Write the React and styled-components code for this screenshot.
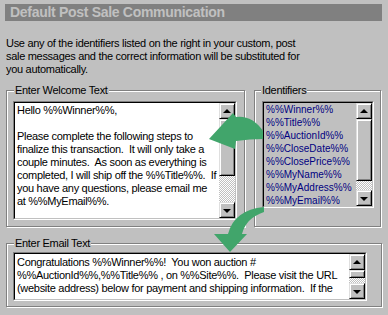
import React from "react";
import styled, { createGlobalStyle } from "styled-components";

const GlobalStyle = createGlobalStyle`
  html, body {
    margin: 0;
    padding: 0;
    background: #c0c0c0;
  }
  body {
    font-family: "Liberation Sans", Arial, sans-serif;
    font-size: 11px;
    letter-spacing: -0.3px;
    color: #000;
  }
`;

const Page = styled.div`
  position: relative;
  width: 388px;
  height: 315px;
  overflow: hidden;
  background: #c0c0c0;
  padding-top: 4px;
  box-sizing: border-box;
`;

const TitleBar = styled.div`
  margin: 0 6px 0 5px;
  height: 17px;
  background: #808080;
  color: #c0c0c0;
  font-weight: bold;
  font-size: 14px;
  line-height: 17px;
  padding-left: 5px;
  white-space: nowrap;
`;

const Intro = styled.p`
  margin: 16px 0 0 6px;
  line-height: 13px;
`;

const Row = styled.div`
  display: flex;
  margin: 14px 0 0 6px;
  gap: 9px;
`;

const Group = styled.div`
  position: relative;
  box-sizing: border-box;
  width: ${(p) => p.$w}px;
  height: ${(p) => p.$h}px;
  border: 1px solid #808080;
  box-shadow: inset 1px 1px 0 #fff, 1px 1px 0 #fff;
  padding: ${(p) => p.$pad};
`;

const EmailGroup = styled(Group)`
  margin: 16px 0 0 6px;
`;

const GroupLabel = styled.span`
  position: absolute;
  top: -7px;
  left: ${(p) => p.$left || 7}px;
  padding: 0 1px;
  background: #c0c0c0;
  line-height: 13px;
  white-space: nowrap;
`;

const Field = styled.div`
  box-sizing: border-box;
  width: ${(p) => p.$w}px;
  height: ${(p) => p.$h}px;
  border: 1px solid;
  border-color: #808080 #fff #fff #808080;
  display: flex;
`;

const FieldInner = styled.div`
  flex: 1;
  display: flex;
  border: 1px solid;
  border-color: #000 #c0c0c0 #c0c0c0 #000;
  background: ${(p) => (p.$white ? "#fff" : "#c0c0c0")};
  min-width: 0;
`;

const TextContent = styled.div`
  flex: 1;
  overflow: hidden;
  white-space: pre;
  line-height: 13px;
  padding: ${(p) => p.$pad};
`;

const ListContent = styled.ul`
  flex: 1;
  list-style: none;
  margin: 0;
  padding: 0 0 0 2px;
  overflow: hidden;
  color: #000080;
  font-size: 10px;
  letter-spacing: 0;
  line-height: 13px;
`;

const ScrollBar = styled.div`
  width: 16px;
  display: flex;
  flex-direction: column;
`;

const ScrollButton = styled.div`
  box-sizing: border-box;
  width: 16px;
  height: 16px;
  flex: none;
  background: #c0c0c0;
  border: 1px solid;
  border-color: #dfdfdf #000 #000 #dfdfdf;
  box-shadow: inset 1px 1px 0 #fff, inset -1px -1px 0 #808080;
  display: flex;
  align-items: center;
  justify-content: center;
`;

const Arrow = styled.span`
  width: 0;
  height: 0;
  border-left: 4px solid transparent;
  border-right: 4px solid transparent;
  ${(p) =>
    p.$down
      ? "border-top: 4px solid #000; margin-top: 1px;"
      : "border-bottom: 4px solid #000; margin-top: -1px;"}
`;

const Thumb = styled(ScrollButton)`
  height: ${(p) => p.$h}px;
`;

const Track = styled.div`
  flex: 1;
  background: repeating-conic-gradient(#fff 0 25%, #c0c0c0 0 50%) 0 0 / 2px 2px;
`;

const Overlay = styled.svg`
  position: absolute;
  left: 0;
  top: 0;
  pointer-events: none;
`;

function Scroll({ thumb }) {
  return (
    <ScrollBar>
      <ScrollButton>
        <Arrow />
      </ScrollButton>
      <Thumb $h={thumb} />
      <Track />
      <ScrollButton>
        <Arrow $down />
      </ScrollButton>
    </ScrollBar>
  );
}

const welcome = `Hello %%Winner%%,

Please complete the following steps to
finalize this transaction.  It will only take a
couple minutes.  As soon as everything is
completed, I will ship off the %%Title%%.  If
you have any questions, please email me
at %%MyEmail%%.`;

const email = `Congratulations %%Winner%%!  You won auction #
%%AuctionId%%,%%Title%% , on %%Site%%.  Please visit the URL
(website address) below for payment and shipping information.  If the`;

const identifiers = [
  "%%Winner%%",
  "%%Title%%",
  "%%AuctionId%%",
  "%%CloseDate%%",
  "%%ClosePrice%%",
  "%%MyName%%",
  "%%MyAddress%%",
  "%%MyEmail%%",
];

export default function App() {
  return (
    <>
      <GlobalStyle />
      <Page>
        <TitleBar>Default Post Sale Communication</TitleBar>
        <Intro>
          Use any of the identifiers listed on the right in your custom, post
          <br />
          sale messages and the correct information will be substituted for
          <br />
          you automatically.
        </Intro>
        <Row>
          <Group $w={239} $h={137} $pad="10px 0 0 6px">
            <GroupLabel>Enter Welcome Text</GroupLabel>
            <Field $w={224} $h={119}>
              <FieldInner $white>
                <TextContent $pad="1px 0 0 2px">{welcome}</TextContent>
                <Scroll thumb={57} />
              </FieldInner>
            </Field>
          </Group>
          <Group $w={127} $h={137} $pad="10px 0 0 7px">
            <GroupLabel $left={6}>Identifiers</GroupLabel>
            <Field $w={112} $h={107}>
              <FieldInner>
                <ListContent>
                  {identifiers.map((t) => (
                    <li key={t}>{t}</li>
                  ))}
                </ListContent>
                <Scroll thumb={62} />
              </FieldInner>
            </Field>
          </Group>
        </Row>
        <EmailGroup $w={376} $h={64} $pad="8px 0 0 6px">
          <GroupLabel>Enter Email Text</GroupLabel>
          <Field $w={354} $h={49}>
            <FieldInner $white>
              <TextContent $pad="2px 0 0 2px">{email}</TextContent>
              <Scroll thumb={8} />
            </FieldInner>
          </Field>
        </EmailGroup>
        <Overlay width="388" height="315" viewBox="0 0 388 315">
          <path
            d="M263 131 Q252 115 236 117 L233 113 L209 139 L235 149 L236 141 Q250 139 263 139 Z"
            fill="#41a56b"
          />
          <path
            d="M264 207 Q234 210 228 234 L214 234 L230 252 L247 234 L242 234 Q246 218 264 212 Z"
            fill="#41a56b"
          />
        </Overlay>
      </Page>
    </>
  );
}
